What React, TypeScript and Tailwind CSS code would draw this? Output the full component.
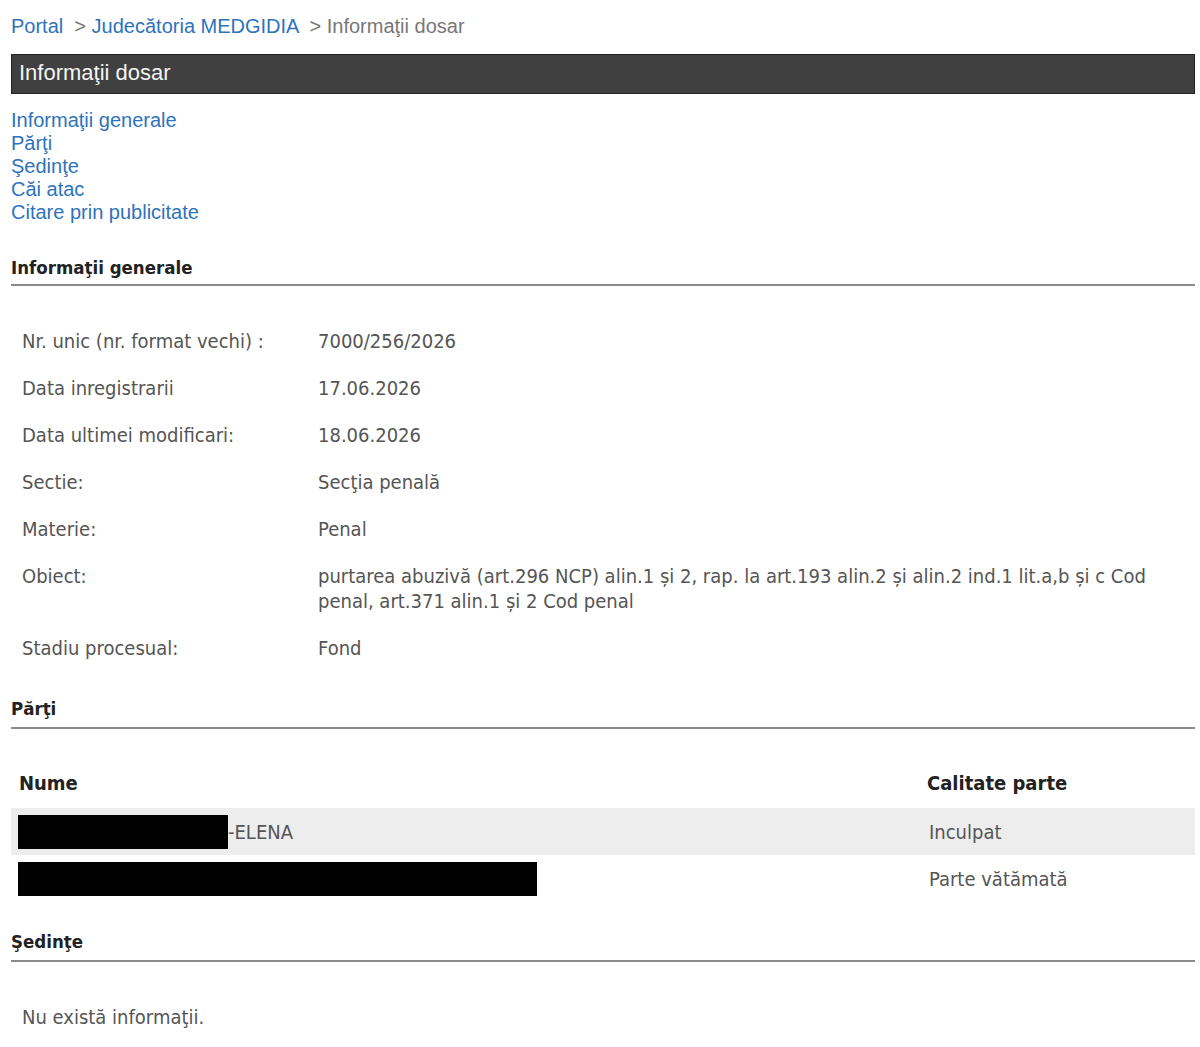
const arial = { fontFamily: '"Liberation Sans", Arial, sans-serif' };
const tahoma = { fontFamily: '"DejaVu Sans Condensed", "DejaVu Sans", Tahoma, sans-serif' };

const detalii = [
  ["Nr. unic (nr. format vechi) :", "7000/256/2026"],
  ["Data inregistrarii", "17.06.2026"],
  ["Data ultimei modificari:", "18.06.2026"],
  ["Sectie:", "Secţia penală"],
  ["Materie:", "Penal"],
  [
    "Obiect:",
    "purtarea abuzivă (art.296 NCP) alin.1 și 2, rap. la art.193 alin.2 și alin.2 ind.1 lit.a,b și c Cod penal, art.371 alin.1 și 2 Cod penal",
  ],
  ["Stadiu procesual:", "Fond"],
];

function Titlu({ text, pb = "pb-[4px]" }: { text: string; pb?: string }) {
  return (
    <div className={`border-b-2 border-[#8a8a8a] ${pb}`}>
      <h3 className="text-[18.5px] font-bold leading-[24px] text-[#222]" style={tahoma}>
        {text}
      </h3>
    </div>
  );
}

export default function App() {
  return (
    <div className="min-h-screen bg-white pl-[11px] pr-[5px] pt-[12px]">
      {/* breadcrumb */}
      <div className="text-[20px] leading-[28px]" style={arial}>
        <a className="text-[#2d73bd]">Portal</a>
        <span className="text-[#777]"> &nbsp;&gt; </span>
        <a className="text-[#2d73bd]">Judecătoria MEDGIDIA</a>
        <span className="text-[#777]"> &nbsp;&gt; Informaţii dosar</span>
      </div>

      <div
        className="mt-[14px] flex h-[40px] items-center border border-[#222] bg-[#404040] px-[7px] pb-[3px] text-[22px] text-[#f4f4f4]"
        style={arial}
      >
        Informaţii dosar
      </div>

      <div className="mt-[15px] flex flex-col text-[20px] leading-[23px] text-[#2d73bd]" style={arial}>
        <a>Informaţii generale</a>
        <a>Părţi</a>
        <a>Şedinţe</a>
        <a>Căi atac</a>
        <a>Citare prin publicitate</a>
      </div>

      <div className="mt-[32px]">
        <Titlu text="Informaţii generale" />
      </div>

      <div className="pt-[43px] text-[20px] leading-[25px] text-[#555]" style={tahoma}>
        {detalii.map(([eticheta, valoare]) => (
          <div key={eticheta} className="flex pb-[22px] pl-[11px]">
            <div className="w-[296px] shrink-0">{eticheta}</div>
            <div className="pr-[30px]">{valoare}</div>
          </div>
        ))}
      </div>

      <div className="mt-[14px]">
        <Titlu text="Părţi" pb="pb-[6px]" />
      </div>

      <div className="pt-[39px] text-[20px]" style={tahoma}>
        <div className="flex h-[40px] items-start pl-[8px] font-bold text-[#222]">
          <div className="w-[908px]">Nume</div>
          <div>Calitate parte</div>
        </div>
        <div className="flex h-[47px] items-center bg-[#ededed] pl-[7px] text-[#555]">
          <div className="flex w-[911px] items-center">
            <span className="inline-block h-[34px] w-[210px] bg-black" />
            <span>-ELENA</span>
          </div>
          <div>Inculpat</div>
        </div>
        <div className="flex h-[47px] items-center pl-[7px] text-[#555]">
          <div className="w-[911px]">
            <span className="block h-[34px] w-[519px] bg-black" />
          </div>
          <div>Parte vătămată</div>
        </div>
      </div>

      <div className="mt-[28px]">
        <Titlu text="Şedinţe" pb="pb-[6px]" />
      </div>

      <div className="pl-[11px] pt-[40px] text-[20px] text-[#555]" style={tahoma}>
        Nu există informaţii.
      </div>
    </div>
  );
}
